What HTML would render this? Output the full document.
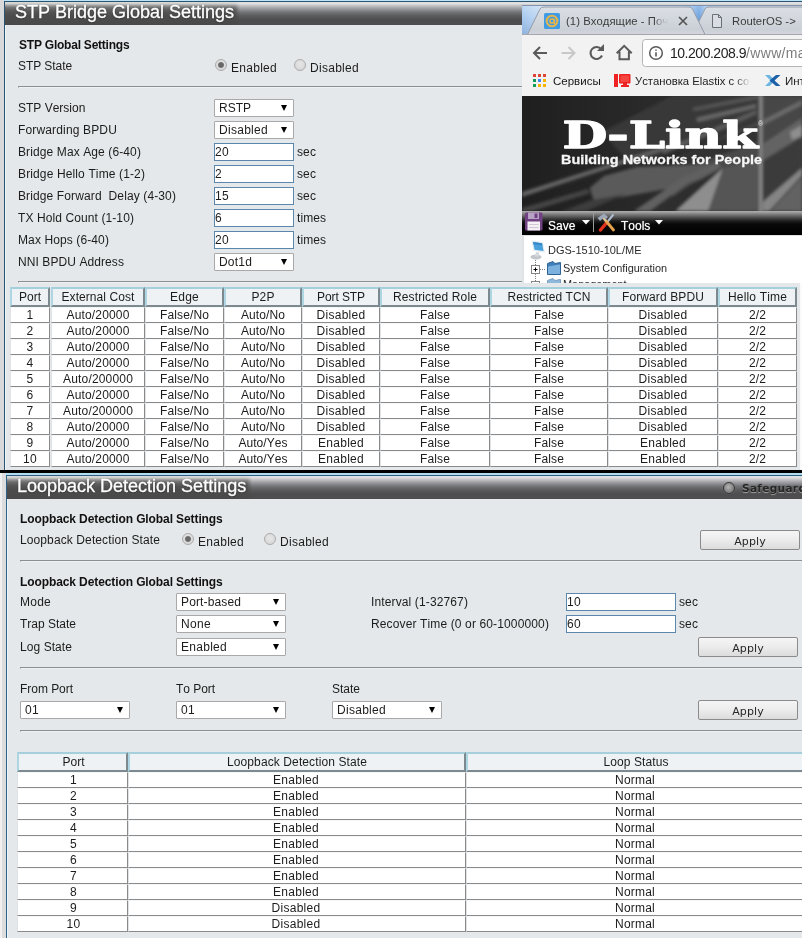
<!DOCTYPE html>
<html lang="en">
<head>
<meta charset="utf-8">
<title>STP Bridge Global Settings</title>
<style>
*{box-sizing:border-box;margin:0;padding:0}
html,body{width:802px;height:938px;overflow:hidden}
body{position:relative;background:#e4e8ea;font-family:"Liberation Sans",sans-serif;font-size:12px;color:#1c1c1c;line-height:14px;font-kerning:none}
.a{position:absolute}
.t{position:absolute;white-space:nowrap;line-height:14px;height:14px}
.b{font-weight:bold;color:#111}
.hr{position:absolute;height:2px;border-top:1px solid #8c8f90;border-left:1px solid #8c8f90;border-bottom:1px solid #eef1f3}
.hdr{position:absolute;background:linear-gradient(#dedfe1 0,#e2e2e4 6%,#c6c6c9 15%,#a3a3a7 26%,#8b8b91 35%,#737577 44%,#666868 52%,#5b5b5d 61%,#535355 70%,#4d4c4e 79%,#4e4e50 100%);color:#fff;font-size:18px;line-height:22px;white-space:nowrap;overflow:hidden;text-shadow:0 1px 1px rgba(0,0,0,.3),0 0 2px rgba(0,0,0,.25);-webkit-text-stroke:.3px #fff}
.hz{position:absolute;height:23px;background:linear-gradient(#dcdcdc 0,#d0d0d0 7%,#b9b9b9 11%,#9f9f9f 15%,#898989 19.500%,#757575 24%,#616161 33%,#555 43%,#4c4c4c 60%,#494949 100%);-webkit-mask-image:linear-gradient(90deg,#000 0,#000 calc(100% - 5px),transparent 100%);mask-image:linear-gradient(90deg,#000 0,#000 calc(100% - 5px),transparent 100%)}
.sel{position:absolute;height:18px;background:#fff;border:1px solid #a9a9a9;border-radius:1px;padding-left:4px;line-height:16px;white-space:nowrap}
.sel i{position:absolute;right:6px;top:5px;width:0;height:0;border-left:3px solid transparent;border-right:3px solid transparent;border-top:6px solid #000}
.inp{position:absolute;height:18px;background:#fff;border:1px solid #5b87ad;padding-left:0;line-height:16px;white-space:nowrap}
.rad{position:absolute;width:12px;height:12px;border-radius:50%;border:1px solid #ababab;background:radial-gradient(circle at 50% 40%,#e6e6e6 0,#dcdcdc 55%,#cfcfcf 100%)}
.rad.on::after{content:"";position:absolute;left:2px;top:2px;width:6px;height:6px;border-radius:50%;background:radial-gradient(circle,#666 0,#6a6a6a 55%,rgba(120,120,120,.5) 100%)}
.btn{position:absolute;height:20px;border:1px solid #8b8b8b;border-radius:2px;background:linear-gradient(#f5f5f5 0,#ededed 45%,#dcdcdc 100%);text-align:center;line-height:20px;padding-top:1px;font-family:"DejaVu Sans","Liberation Sans",sans-serif;font-size:11px;letter-spacing:.1px;color:#262626}
.tb{position:absolute}
.tb div{position:absolute;text-align:center;white-space:nowrap;overflow:hidden;height:16px;line-height:15px;background:#fff;border-right:1px solid #8a8a8a;border-bottom:1px solid #8a8a8a;border-left:1px solid #dfe3e5;border-top:1px solid #f4f6f7}
.tb div.h{height:20px;line-height:16px;background:#eef2f4;border-top:2px solid #a6cfdc;border-left:2px solid #aed6e2;border-right:2px solid #7c8a90;border-bottom:2px solid #7c8a90}
</style>
</head>
<body>
<div id="wrap" style="position:absolute;left:0;top:0;width:802px;height:938px;overflow:hidden;will-change:transform">
<!-- top panel frame -->
<div class="a" style="left:0px;top:0px;width:4px;height:470px;background:#d9d9dc"></div>
<div class="a" style="left:4px;top:1px;width:1px;height:469px;background:#2a5470"></div>
<div class="a" style="left:5px;top:2px;width:1px;height:468px;background:#eaf6fb"></div>
<div class="a" style="left:4px;top:0px;width:798px;height:1px;background:#bde4f6"></div>
<div class="a" style="left:4px;top:1px;width:798px;height:1px;background:#2a5470"></div>
<div class="hdr" style="left:5px;top:2px;width:797px;height:23px"></div>
<div class="hz" style="left:5px;top:2px;width:235px"></div>
<div class="hdr" style="left:5px;top:2px;width:517px;height:23px;padding-left:10px;line-height:21px;background:none">STP Bridge Global Settings</div>
<div class="t b" style="left:19px;top:38px;letter-spacing:-0.226px">STP Global Settings</div>
<div class="t" style="left:18px;top:59px;letter-spacing:-0.077px">STP State</div>
<div class="rad on" style="left:215px;top:59px"></div>
<div class="t" style="left:231px;top:61px;letter-spacing:0.28px">Enabled</div>
<div class="rad" style="left:294px;top:59px"></div>
<div class="t" style="left:310px;top:61px;letter-spacing:0.288px">Disabled</div>
<div class="hr" style="left:18px;top:86px;width:505px"></div>
<div class="t" style="left:18px;top:101px">STP Version</div>
<div class="sel" style="left:214px;top:99px;width:80px">RSTP<i></i></div>
<div class="t" style="left:18px;top:123px;letter-spacing:0.154px">Forwarding BPDU</div>
<div class="sel" style="left:214px;top:121px;width:80px;letter-spacing:0.288px">Disabled<i></i></div>
<div class="t" style="left:18px;top:145px;letter-spacing:0.109px">Bridge Max Age (6-40)</div>
<div class="inp" style="left:214px;top:143px;width:80px;letter-spacing:0.326px">20</div>
<div class="t" style="left:297px;top:145px;letter-spacing:0.109px">sec</div>
<div class="t" style="left:18px;top:167px;letter-spacing:0.129px">Bridge Hello Time (1-2)</div>
<div class="inp" style="left:214px;top:165px;width:80px;letter-spacing:0.326px">2</div>
<div class="t" style="left:297px;top:167px;letter-spacing:0.109px">sec</div>
<div class="t" style="left:18px;top:189px;letter-spacing:0.117px">Bridge Forward&nbsp; Delay (4-30)</div>
<div class="inp" style="left:214px;top:187px;width:80px;letter-spacing:0.326px">15</div>
<div class="t" style="left:297px;top:189px;letter-spacing:0.109px">sec</div>
<div class="t" style="left:18px;top:211px;letter-spacing:0.098px">TX Hold Count (1-10)</div>
<div class="inp" style="left:214px;top:209px;width:80px;letter-spacing:0.326px">6</div>
<div class="t" style="left:297px;top:211px;letter-spacing:0.066px">times</div>
<div class="t" style="left:18px;top:233px;letter-spacing:0.109px">Max Hops (6-40)</div>
<div class="inp" style="left:214px;top:231px;width:80px;letter-spacing:0.326px">20</div>
<div class="t" style="left:297px;top:233px;letter-spacing:0.066px">times</div>
<div class="t" style="left:18px;top:255px;letter-spacing:0.082px">NNI BPDU Address</div>
<div class="sel" style="left:214px;top:253px;width:80px;letter-spacing:0.196px">Dot1d<i></i></div>
<div class="hr" style="left:18px;top:281px;width:505px"></div>
<div class="a" style="left:800px;top:283px;width:2px;height:187px;background:#fbfbfb"></div>
<div class="tb" style="left:0;top:0">
<div class="h" style="left:10px;top:287px;width:40px;">Port</div>
<div class="h" style="left:51px;top:287px;width:94px;letter-spacing:0.075px">External Cost</div>
<div class="h" style="left:145px;top:287px;width:79px;letter-spacing:0.244px">Edge</div>
<div class="h" style="left:224px;top:287px;width:78px;letter-spacing:0.106px">P2P</div>
<div class="h" style="left:302px;top:287px;width:78px;letter-spacing:-0.085px">Port STP</div>
<div class="h" style="left:380px;top:287px;width:110px;letter-spacing:0.131px">Restricted Role</div>
<div class="h" style="left:490px;top:287px;width:118px;letter-spacing:0.07px">Restricted TCN</div>
<div class="h" style="left:608px;top:287px;width:110px;letter-spacing:0.11px">Forward BPDU</div>
<div class="h" style="left:718px;top:287px;width:79px;letter-spacing:0.165px">Hello Time</div>
<div style="left:10px;top:307px;width:40px;letter-spacing:0.326px">1</div>
<div style="left:51px;top:307px;width:94px;letter-spacing:0.161px">Auto/20000</div>
<div style="left:145px;top:307px;width:79px;letter-spacing:0.123px">False/No</div>
<div style="left:224px;top:307px;width:78px;letter-spacing:0.092px">Auto/No</div>
<div style="left:302px;top:307px;width:78px;letter-spacing:0.288px">Disabled</div>
<div style="left:380px;top:307px;width:110px;letter-spacing:0.131px">False</div>
<div style="left:490px;top:307px;width:118px;letter-spacing:0.131px">False</div>
<div style="left:608px;top:307px;width:110px;letter-spacing:0.288px">Disabled</div>
<div style="left:718px;top:307px;width:79px;letter-spacing:0.106px">2/2</div>
<div style="left:10px;top:323px;width:40px;letter-spacing:0.326px">2</div>
<div style="left:51px;top:323px;width:94px;letter-spacing:0.161px">Auto/20000</div>
<div style="left:145px;top:323px;width:79px;letter-spacing:0.123px">False/No</div>
<div style="left:224px;top:323px;width:78px;letter-spacing:0.092px">Auto/No</div>
<div style="left:302px;top:323px;width:78px;letter-spacing:0.288px">Disabled</div>
<div style="left:380px;top:323px;width:110px;letter-spacing:0.131px">False</div>
<div style="left:490px;top:323px;width:118px;letter-spacing:0.131px">False</div>
<div style="left:608px;top:323px;width:110px;letter-spacing:0.288px">Disabled</div>
<div style="left:718px;top:323px;width:79px;letter-spacing:0.106px">2/2</div>
<div style="left:10px;top:339px;width:40px;letter-spacing:0.326px">3</div>
<div style="left:51px;top:339px;width:94px;letter-spacing:0.161px">Auto/20000</div>
<div style="left:145px;top:339px;width:79px;letter-spacing:0.123px">False/No</div>
<div style="left:224px;top:339px;width:78px;letter-spacing:0.092px">Auto/No</div>
<div style="left:302px;top:339px;width:78px;letter-spacing:0.288px">Disabled</div>
<div style="left:380px;top:339px;width:110px;letter-spacing:0.131px">False</div>
<div style="left:490px;top:339px;width:118px;letter-spacing:0.131px">False</div>
<div style="left:608px;top:339px;width:110px;letter-spacing:0.288px">Disabled</div>
<div style="left:718px;top:339px;width:79px;letter-spacing:0.106px">2/2</div>
<div style="left:10px;top:355px;width:40px;letter-spacing:0.326px">4</div>
<div style="left:51px;top:355px;width:94px;letter-spacing:0.161px">Auto/20000</div>
<div style="left:145px;top:355px;width:79px;letter-spacing:0.123px">False/No</div>
<div style="left:224px;top:355px;width:78px;letter-spacing:0.092px">Auto/No</div>
<div style="left:302px;top:355px;width:78px;letter-spacing:0.288px">Disabled</div>
<div style="left:380px;top:355px;width:110px;letter-spacing:0.131px">False</div>
<div style="left:490px;top:355px;width:118px;letter-spacing:0.131px">False</div>
<div style="left:608px;top:355px;width:110px;letter-spacing:0.288px">Disabled</div>
<div style="left:718px;top:355px;width:79px;letter-spacing:0.106px">2/2</div>
<div style="left:10px;top:371px;width:40px;letter-spacing:0.326px">5</div>
<div style="left:51px;top:371px;width:94px;letter-spacing:0.176px">Auto/200000</div>
<div style="left:145px;top:371px;width:79px;letter-spacing:0.123px">False/No</div>
<div style="left:224px;top:371px;width:78px;letter-spacing:0.092px">Auto/No</div>
<div style="left:302px;top:371px;width:78px;letter-spacing:0.288px">Disabled</div>
<div style="left:380px;top:371px;width:110px;letter-spacing:0.131px">False</div>
<div style="left:490px;top:371px;width:118px;letter-spacing:0.131px">False</div>
<div style="left:608px;top:371px;width:110px;letter-spacing:0.288px">Disabled</div>
<div style="left:718px;top:371px;width:79px;letter-spacing:0.106px">2/2</div>
<div style="left:10px;top:387px;width:40px;letter-spacing:0.326px">6</div>
<div style="left:51px;top:387px;width:94px;letter-spacing:0.161px">Auto/20000</div>
<div style="left:145px;top:387px;width:79px;letter-spacing:0.123px">False/No</div>
<div style="left:224px;top:387px;width:78px;letter-spacing:0.092px">Auto/No</div>
<div style="left:302px;top:387px;width:78px;letter-spacing:0.288px">Disabled</div>
<div style="left:380px;top:387px;width:110px;letter-spacing:0.131px">False</div>
<div style="left:490px;top:387px;width:118px;letter-spacing:0.131px">False</div>
<div style="left:608px;top:387px;width:110px;letter-spacing:0.288px">Disabled</div>
<div style="left:718px;top:387px;width:79px;letter-spacing:0.106px">2/2</div>
<div style="left:10px;top:403px;width:40px;letter-spacing:0.326px">7</div>
<div style="left:51px;top:403px;width:94px;letter-spacing:0.176px">Auto/200000</div>
<div style="left:145px;top:403px;width:79px;letter-spacing:0.123px">False/No</div>
<div style="left:224px;top:403px;width:78px;letter-spacing:0.092px">Auto/No</div>
<div style="left:302px;top:403px;width:78px;letter-spacing:0.288px">Disabled</div>
<div style="left:380px;top:403px;width:110px;letter-spacing:0.131px">False</div>
<div style="left:490px;top:403px;width:118px;letter-spacing:0.131px">False</div>
<div style="left:608px;top:403px;width:110px;letter-spacing:0.288px">Disabled</div>
<div style="left:718px;top:403px;width:79px;letter-spacing:0.106px">2/2</div>
<div style="left:10px;top:419px;width:40px;letter-spacing:0.326px">8</div>
<div style="left:51px;top:419px;width:94px;letter-spacing:0.161px">Auto/20000</div>
<div style="left:145px;top:419px;width:79px;letter-spacing:0.123px">False/No</div>
<div style="left:224px;top:419px;width:78px;letter-spacing:0.092px">Auto/No</div>
<div style="left:302px;top:419px;width:78px;letter-spacing:0.288px">Disabled</div>
<div style="left:380px;top:419px;width:110px;letter-spacing:0.131px">False</div>
<div style="left:490px;top:419px;width:118px;letter-spacing:0.131px">False</div>
<div style="left:608px;top:419px;width:110px;letter-spacing:0.288px">Disabled</div>
<div style="left:718px;top:419px;width:79px;letter-spacing:0.106px">2/2</div>
<div style="left:10px;top:435px;width:40px;letter-spacing:0.326px">9</div>
<div style="left:51px;top:435px;width:94px;letter-spacing:0.161px">Auto/20000</div>
<div style="left:145px;top:435px;width:79px;letter-spacing:0.123px">False/No</div>
<div style="left:224px;top:435px;width:78px;letter-spacing:0.038px">Auto/Yes</div>
<div style="left:302px;top:435px;width:78px;letter-spacing:0.28px">Enabled</div>
<div style="left:380px;top:435px;width:110px;letter-spacing:0.131px">False</div>
<div style="left:490px;top:435px;width:118px;letter-spacing:0.131px">False</div>
<div style="left:608px;top:435px;width:110px;letter-spacing:0.28px">Enabled</div>
<div style="left:718px;top:435px;width:79px;letter-spacing:0.106px">2/2</div>
<div style="left:10px;top:451px;width:40px;letter-spacing:0.326px">10</div>
<div style="left:51px;top:451px;width:94px;letter-spacing:0.161px">Auto/20000</div>
<div style="left:145px;top:451px;width:79px;letter-spacing:0.123px">False/No</div>
<div style="left:224px;top:451px;width:78px;letter-spacing:0.038px">Auto/Yes</div>
<div style="left:302px;top:451px;width:78px;letter-spacing:0.28px">Enabled</div>
<div style="left:380px;top:451px;width:110px;letter-spacing:0.131px">False</div>
<div style="left:490px;top:451px;width:118px;letter-spacing:0.131px">False</div>
<div style="left:608px;top:451px;width:110px;letter-spacing:0.28px">Enabled</div>
<div style="left:718px;top:451px;width:79px;letter-spacing:0.106px">2/2</div>
</div>
<div class="a" style="left:0px;top:470px;width:802px;height:3px;background:#000"></div>
<!-- bottom panel frame -->
<div class="a" style="left:0px;top:473px;width:2px;height:465px;background:#f0f0f0"></div>
<div class="a" style="left:2px;top:473px;width:4px;height:465px;background:#dcdcde"></div>
<div class="a" style="left:6px;top:473px;width:796px;height:2px;background:#b4dcf0"></div>
<div class="a" style="left:6px;top:475px;width:796px;height:1px;background:#2c5f84"></div>
<div class="a" style="left:6px;top:475px;width:1px;height:463px;background:#2c6288"></div>
<div class="a" style="left:7px;top:476px;width:1px;height:462px;background:#eaf6fb"></div>
<div class="hdr" style="left:7px;top:476px;width:795px;height:23px"></div>
<div class="hz" style="left:7px;top:476px;width:245px"></div>
<div class="hdr" style="left:7px;top:476px;width:600px;height:23px;padding-left:10px;line-height:20px;background:none">Loopback Detection Settings</div>
<div class="a" style="left:723px;top:482px;width:12px;height:12px;border-radius:50%;border:1.5px solid #383838;background:radial-gradient(circle at 45% 40%,#b4b4b4 0,#8c8c8c 50%,#6a6a6a 100%);box-shadow:0 0 1px #888"></div>
<div class="t" style="left:742px;top:481px;font-family:&quot;DejaVu Sans&quot;,&quot;Liberation Sans&quot;,sans-serif;font-weight:bold;font-size:10.5px;letter-spacing:.35px;color:#262626;text-shadow:0 1px 1px rgba(190,190,190,.8),0 0 2px rgba(40,40,40,.6)">Safeguard</div>
<div class="t b" style="left:20px;top:512px;letter-spacing:-0.099px">Loopback Detection Global Settings</div>
<div class="t" style="left:20px;top:533px;letter-spacing:0.107px">Loopback Detection State</div>
<div class="rad on" style="left:182px;top:533px"></div>
<div class="t" style="left:198px;top:535px;letter-spacing:0.28px">Enabled</div>
<div class="rad" style="left:264px;top:533px"></div>
<div class="t" style="left:280px;top:535px;letter-spacing:0.288px">Disabled</div>
<div class="btn" style="left:700px;top:530px;width:100px">Apply</div>
<div class="hr" style="left:20px;top:560px;width:782px"></div>
<div class="t b" style="left:20px;top:575px;letter-spacing:-0.099px">Loopback Detection Global Settings</div>
<div class="t" style="left:20px;top:595px;letter-spacing:0.246px">Mode</div>
<div class="sel" style="left:176px;top:593px;width:110px;letter-spacing:0.13px">Port-based<i></i></div>
<div class="t" style="left:20px;top:617px">Trap State</div>
<div class="sel" style="left:176px;top:615px;width:110px;letter-spacing:0.328px">None<i></i></div>
<div class="t" style="left:20px;top:640px;letter-spacing:0.069px">Log State</div>
<div class="sel" style="left:176px;top:638px;width:110px;letter-spacing:0.28px">Enabled<i></i></div>
<div class="t" style="left:371px;top:595px;letter-spacing:0.127px">Interval (1-32767)</div>
<div class="inp" style="left:566px;top:593px;width:110px;letter-spacing:0.326px">10</div>
<div class="t" style="left:679px;top:595px;letter-spacing:0.109px">sec</div>
<div class="t" style="left:371px;top:617px;letter-spacing:0.131px">Recover Time (0 or 60-1000000)</div>
<div class="inp" style="left:566px;top:615px;width:110px;letter-spacing:0.326px">60</div>
<div class="t" style="left:679px;top:617px;letter-spacing:0.109px">sec</div>
<div class="btn" style="left:698px;top:637px;width:100px">Apply</div>
<div class="hr" style="left:20px;top:667px;width:782px"></div>
<div class="t" style="left:20px;top:682px;letter-spacing:-0.038px">From Port</div>
<div class="t" style="left:176px;top:682px;letter-spacing:-0.049px">To Port</div>
<div class="t" style="left:332px;top:682px">State</div>
<div class="sel" style="left:20px;top:701px;width:110px;letter-spacing:0.326px">01<i></i></div>
<div class="sel" style="left:176px;top:701px;width:110px;letter-spacing:0.326px">01<i></i></div>
<div class="sel" style="left:332px;top:701px;width:110px;letter-spacing:0.288px">Disabled<i></i></div>
<div class="btn" style="left:698px;top:700px;width:100px">Apply</div>
<div class="hr" style="left:20px;top:730px;width:782px"></div>
<div class="tb" style="left:0;top:0">
<div class="h" style="left:17px;top:752px;width:111px;padding-left:2px;">Port</div>
<div class="h" style="left:128px;top:752px;width:338px;letter-spacing:0.107px">Loopback Detection State</div>
<div class="h" style="left:466px;top:752px;width:340px;letter-spacing:0.086px">Loop Status</div>
<div style="left:17px;top:772px;width:111px;padding-left:2px;letter-spacing:0.326px">1</div>
<div style="left:128px;top:772px;width:338px;padding-right:2px;letter-spacing:0.28px">Enabled</div>
<div style="left:466px;top:772px;width:340px;padding-right:2px;letter-spacing:0.221px">Normal</div>
<div style="left:17px;top:788px;width:111px;padding-left:2px;letter-spacing:0.326px">2</div>
<div style="left:128px;top:788px;width:338px;padding-right:2px;letter-spacing:0.28px">Enabled</div>
<div style="left:466px;top:788px;width:340px;padding-right:2px;letter-spacing:0.221px">Normal</div>
<div style="left:17px;top:804px;width:111px;padding-left:2px;letter-spacing:0.326px">3</div>
<div style="left:128px;top:804px;width:338px;padding-right:2px;letter-spacing:0.28px">Enabled</div>
<div style="left:466px;top:804px;width:340px;padding-right:2px;letter-spacing:0.221px">Normal</div>
<div style="left:17px;top:820px;width:111px;padding-left:2px;letter-spacing:0.326px">4</div>
<div style="left:128px;top:820px;width:338px;padding-right:2px;letter-spacing:0.28px">Enabled</div>
<div style="left:466px;top:820px;width:340px;padding-right:2px;letter-spacing:0.221px">Normal</div>
<div style="left:17px;top:836px;width:111px;padding-left:2px;letter-spacing:0.326px">5</div>
<div style="left:128px;top:836px;width:338px;padding-right:2px;letter-spacing:0.28px">Enabled</div>
<div style="left:466px;top:836px;width:340px;padding-right:2px;letter-spacing:0.221px">Normal</div>
<div style="left:17px;top:852px;width:111px;padding-left:2px;letter-spacing:0.326px">6</div>
<div style="left:128px;top:852px;width:338px;padding-right:2px;letter-spacing:0.28px">Enabled</div>
<div style="left:466px;top:852px;width:340px;padding-right:2px;letter-spacing:0.221px">Normal</div>
<div style="left:17px;top:868px;width:111px;padding-left:2px;letter-spacing:0.326px">7</div>
<div style="left:128px;top:868px;width:338px;padding-right:2px;letter-spacing:0.28px">Enabled</div>
<div style="left:466px;top:868px;width:340px;padding-right:2px;letter-spacing:0.221px">Normal</div>
<div style="left:17px;top:884px;width:111px;padding-left:2px;letter-spacing:0.326px">8</div>
<div style="left:128px;top:884px;width:338px;padding-right:2px;letter-spacing:0.28px">Enabled</div>
<div style="left:466px;top:884px;width:340px;padding-right:2px;letter-spacing:0.221px">Normal</div>
<div style="left:17px;top:900px;width:111px;padding-left:2px;letter-spacing:0.326px">9</div>
<div style="left:128px;top:900px;width:338px;padding-right:2px;letter-spacing:0.288px">Disabled</div>
<div style="left:466px;top:900px;width:340px;padding-right:2px;letter-spacing:0.221px">Normal</div>
<div style="left:17px;top:916px;width:111px;padding-left:2px;letter-spacing:0.326px">10</div>
<div style="left:128px;top:916px;width:338px;padding-right:2px;letter-spacing:0.288px">Disabled</div>
<div style="left:466px;top:916px;width:340px;padding-right:2px;letter-spacing:0.221px">Normal</div>
</div>
<!-- ===== browser window overlay ===== -->
<div class="a" id="ov" style="left:522px;top:2px;width:280px;height:281px;overflow:hidden;background:#fff">
  <!-- window frame top -->
  <div class="a" style="left:0;top:0;width:280px;height:3px;background:linear-gradient(#dedfe1 0,#e2e2e4 45%,#cbcbce 100%)"></div>
  <div class="a" style="left:0;top:3px;width:280px;height:1px;background:#8494aa"></div>
  <!-- tab strip -->
  <div class="a" style="left:0;top:4px;width:280px;height:29px;background:linear-gradient(rgba(255,255,255,.25) 0,rgba(255,255,255,0) 40%,rgba(40,80,150,.18) 100%),linear-gradient(90deg,#a6c9ee 0,#b9d4f1 12px,#c6d9ef 24px,#c9d6e6 160px,#8db8e8 170px,#6fa3e0 177px,#9cc0ea 184px,#c9d6e6 200px)"></div>
  <svg class="a" style="left:0;top:4px" width="280" height="29" viewBox="0 0 280 29">
    <defs>
      <linearGradient id="tg" x1="0" y1="0" x2="0" y2="1"><stop offset="0" stop-color="#dadee4"/><stop offset=".8" stop-color="#cbd0d8"/><stop offset="1" stop-color="#d4d7dc"/></linearGradient>
    </defs>
    <path d="M170 29.500 L183 3 Q184 1 187 1 L281 1 L281 29.500 Z" fill="url(#tg)" stroke="#939ca8" stroke-width="1"/>
    <path d="M5 29.500 L18 3 Q19 1 22 1 L167 1 Q169.500 1 170.500 3 L183.500 29.500 Z" fill="url(#tg)" stroke="#939ca8" stroke-width="1"/>
    <!-- favicon -->
    <rect x="22" y="7" width="16" height="16" rx="1.5" fill="#3f9be3"/>
    <circle cx="30" cy="15" r="5.300" fill="none" stroke="#e2b54e" stroke-width="2.100"/>
    <circle cx="30" cy="15" r="2.100" fill="none" stroke="#e2b54e" stroke-width="1.500"/>
    <path d="M32.500 13 L32.500 17.500 Q33.500 18.500 35 17.500" fill="none" stroke="#e2b54e" stroke-width="1.300"/>
    <!-- close x -->
    <path d="M157 11 L165 19 M165 11 L157 19" stroke="#555" stroke-width="1.700" fill="none"/>
    <!-- doc icon -->
    <path d="M190.500 8.500 L196.500 8.500 L199.500 11.500 L199.500 21.500 L190.500 21.500 Z M196.500 8.500 L196.500 11.500 L199.500 11.500" fill="#d9dde3" stroke="#6a7078" stroke-width="1"/>
  </svg>
  <div class="t" style="left:44px;top:12px;width:103px;overflow:hidden;color:#3c3c3c;font-size:11.300px;letter-spacing:.05px;-webkit-mask-image:linear-gradient(90deg,#000 0,#000 88px,rgba(0,0,0,.4) 94px,rgba(0,0,0,.1) 100px,transparent 103px);mask-image:linear-gradient(90deg,#000 0,#000 88px,rgba(0,0,0,.4) 94px,rgba(0,0,0,.1) 100px,transparent 103px)">(1) Входящие - Поч</div>
  <div class="t" style="left:210px;top:12px;color:#3c3c3c;font-size:11.300px">RouterOS -&gt;</div>
  <div class="a" style="left:0;top:32px;width:280px;height:1px;background:#a3a7ad"></div>
  <!-- toolbar -->
  <div class="a" style="left:0;top:33px;width:280px;height:61px;background:#f2f2f2"></div>
  <svg class="a" style="left:0;top:33px" width="280" height="34" viewBox="0 0 280 34">
    <g fill="none" stroke="#5a5a5a" stroke-width="2">
      <path d="M25 18 L12.500 18 M18 12 L12 18 L18 24"/>
      <path d="M39.500 18 L52 18 M46.500 12 L52.500 18 L46.500 24" stroke="#c8c8c8"/>
      <path d="M79.300 14.300 A6 6 0 1 0 80 20.500" stroke-width="2.100"/>
      <path d="M94.700 18.300 L102.200 10.800 L109.700 18.300 M97.500 16.500 L97.500 24.300 L106.900 24.300 L106.900 16.500"/>
    </g>
    <path d="M82 9 L82 16 L75 16 Z" fill="#5a5a5a"/>
    <rect x="120.500" y="4.500" width="170" height="27" rx="3" fill="#fff" stroke="#b4b4b4"/>
    <circle cx="134" cy="18" r="6.300" fill="none" stroke="#5a5a5a" stroke-width="1.5"/>
    <path d="M134 14.500 L134 15.800 M134 17.200 L134 21.600" stroke="#5a5a5a" stroke-width="1.600"/>
  </svg>
  <div class="t" style="left:148px;top:42px;font-size:14px;line-height:18px;height:18px;color:#222;letter-spacing:-.48px">10.200.208.9<span style="color:#7c7c7c;letter-spacing:.35px">/www/ma</span></div>
  <!-- bookmarks -->
  <svg class="a" style="left:0;top:66px" width="280" height="28" viewBox="0 0 280 28">
    <g>
      <rect x="11" y="6" width="3" height="3" fill="#db4437"/><rect x="16" y="6" width="3" height="3" fill="#db4437"/><rect x="21" y="6" width="3" height="3" fill="#db4437"/>
      <rect x="11" y="11" width="3" height="3" fill="#0f9d58"/><rect x="16" y="11" width="3" height="3" fill="#4285f4"/><rect x="21" y="11" width="3" height="3" fill="#f4b400"/>
      <rect x="11" y="16" width="3" height="3" fill="#0f9d58"/><rect x="16" y="16" width="3" height="3" fill="#f4b400"/><rect x="21" y="16" width="3" height="3" fill="#f4b400"/>
    </g>
    <g fill="#ee2222">
      <rect x="92" y="6" width="4" height="13"/>
      <rect x="97" y="6" width="11.500" height="9.500" rx="1"/>
      <rect x="101" y="15" width="4" height="2.500"/><rect x="99" y="17" width="8" height="2"/>
    </g>
    <rect x="98.500" y="7.500" width="8.500" height="6.500" fill="#f5453f"/>
    <path d="M243 7 L247.500 7 L253 12.500 L247.500 18 L243 18 L248.500 12.500 Z" fill="#6cb6e2"/>
    <path d="M258.500 7 L254 7 L247.500 12.500 L254 18 L258.500 18 L252.500 12.500 Z" fill="#1c60aa"/>
  </svg>
  <div class="t" style="left:31px;top:72px;color:#151515;font-size:11.500px">Сервисы</div>
  <div class="t" style="left:113px;top:72px;width:116px;overflow:hidden;color:#222;font-size:11.300px;-webkit-mask-image:linear-gradient(90deg,#000 0,#000 100px,rgba(0,0,0,.2) 112px,transparent 116px);mask-image:linear-gradient(90deg,#000 0,#000 100px,rgba(0,0,0,.2) 112px,transparent 116px)">Установка Elastix с со</div>
  <div class="t" style="left:263px;top:72px;color:#222;font-size:11.500px">Инт</div>
  <!-- banner -->
  <svg class="a" style="left:0;top:94px" width="280" height="115" viewBox="0 0 280 115">
    <defs>
      <linearGradient id="bg1" x1="0" y1="0" x2="1" y2="0"><stop offset="0" stop-color="#1f1f1f"/><stop offset=".5" stop-color="#2b2b2b"/><stop offset="1" stop-color="#3d3d3d"/></linearGradient>
      <filter id="bl" x="-10%" y="-10%" width="120%" height="120%"><feGaussianBlur stdDeviation="1.7"/></filter>
      <filter id="ts" x="-5%" y="-20%" width="110%" height="140%"><feGaussianBlur stdDeviation=".45"/></filter>
    </defs>
    <rect width="280" height="115" fill="url(#bg1)"/>
    <g filter="url(#bl)">
      <path d="M110 70 L236 22 L236 0 L150 0 L80 36 Z" fill="#383838"/>
      <path d="M150 62 L236 26 L236 76 L150 104 Z" fill="#4a4a4a"/>
      <path d="M174 22 L234 8 L234 12 L176 26 Z" fill="#666"/>
      <path d="M170 12 L236 -1 L236 3 L172 15 Z" fill="#545454"/>
      <path d="M140 54 L176 39 L234 14 L235 18 L178 43 L142 58 Z" fill="#5c5c5c"/>
      <path d="M30 100 L236 30 L236 46 L60 108 Z" fill="#1f1f1f" opacity=".55"/>
      <path d="M0 96 L84 69 L160 45 L161 48 L85 73 L0 101 Z" fill="#636363"/>
      <path d="M68 92 L82 80 L115 71 L196 68 L196 78 L150 92 L100 101 L72 105 Z" fill="#5a5a5a"/>
      <path d="M0 112 L66 93 L68 97 L10 115 L0 115 Z" fill="#454545"/>
      <path d="M40 115 L70 104 L104 98 L64 115 Z" fill="#3c3c3c"/>
      <path d="M112 115 L160 82 L196 66 L199 71 L165 88 L128 115 Z" fill="#606060"/>
      <path d="M130 115 L166 90 L200 72 L162 115 Z" fill="#2e2e2e"/>
      <path d="M184 115 L202 72 L237 62 L237 115 Z" fill="#545454"/>
      <path d="M154 115 L201 72 L186 115 Z" fill="#8e8e8e"/>
      <rect x="240" y="0" width="40" height="115" fill="#464646"/>
      <path d="M241 24 L280 4 L280 9 L241 29 Z" fill="#6a6a6a"/>
      <path d="M241 48 L280 22 L280 40 L241 64 Z" fill="#646464"/>
      <path d="M268 36 L280 29 L280 40 L270 44 Z" fill="#8e8e8e"/>
      <path d="M241 66 L280 42 L280 72 L241 104 Z" fill="#3b3b3b"/>
      <path d="M241 106 L280 72 L280 79 L247 115 L241 115 Z" fill="#858585"/>
      <path d="M249 115 L280 81 L280 115 Z" fill="#626262"/>
      <rect x="237" y="-2" width="3.500" height="119" fill="#868686"/>
    </g>
    <text transform="translate(40.500 51.800) scale(1.415 1)" x="0" y="0" font-family="'DejaVu Serif','Liberation Serif',serif" font-weight="bold" font-size="36.500" fill="#fff" stroke="#fff" stroke-width="1.300" stroke-linejoin="round">D-Link</text>
    <text x="236" y="30" font-family="'Liberation Sans',sans-serif" font-size="7" fill="#e8e8e8">®</text>
    <text x="39" y="68" font-family="'Liberation Sans',sans-serif" font-weight="bold" font-size="13.400" fill="#f6f6f6" stroke="#f6f6f6" stroke-width=".3" textLength="201" lengthAdjust="spacingAndGlyphs">Building Networks for People</text>
  </svg>
  <!-- save/tools bar -->
  <div class="a" style="left:0;top:209px;width:280px;height:24px;background:linear-gradient(#adadad 0,#9c9c9c 6%,#7c7c7c 14%,#5c5c5c 23%,#3c3c3c 32%,#1e1e1e 42%,#090909 55%,#000 100%)"></div>
  <div class="a" style="left:0;top:233px;width:280px;height:1px;background:#e2e2e2"></div>
  <svg class="a" style="left:0;top:209px" width="280" height="24" viewBox="0 0 280 24">
    <rect x="3" y="1.500" width="17.500" height="18" rx="1.500" fill="#714283"/>
    <rect x="6" y="1.500" width="11" height="6.500" fill="#b9a2c4"/>
    <rect x="5.500" y="10.500" width="12.500" height="9" fill="#f4f0f6"/>
    <rect x="12.500" y="2.500" width="3" height="4.500" fill="#714283"/>
    <path d="M7 13.500 L16.500 13.500 M7 16.500 L16.500 16.500" stroke="#cfc6d6" stroke-width="1"/>
    <path d="M60 9 L68 9 L64 13.500 Z" fill="#fff"/>
    <rect x="71" y="2" width="1" height="19" fill="#9a9a9a"/>
    <path d="M84.500 12 L91 4" stroke="#aebccf" stroke-width="2" stroke-linecap="round"/>
    <path d="M78.500 19 L84 12.500" stroke="#e2321c" stroke-width="3.400" stroke-linecap="round"/>
    <path d="M91.500 19 L84 10" stroke="#e6a24c" stroke-width="2.800" stroke-linecap="round"/>
    <path d="M84 10 L81 6.500" stroke="#d9c29a" stroke-width="2.400"/>
    <path d="M75.500 7 L82 2.500 L86 6 L84 8 L81.500 6.500 L78 10 Z" fill="#9ea8ba"/>
    <path d="M133 9 L141 9 L137 13.500 Z" fill="#fff"/>
  </svg>
  <div class="t" style="left:26px;top:217px;color:#fff;text-shadow:0 0 1px rgba(255,255,255,.7)">Save</div>
  <div class="t" style="left:99px;top:217px;color:#fff;text-shadow:0 0 1px rgba(255,255,255,.7)">Tools</div>
  <!-- tree -->
  <div class="a" style="left:0;top:233px;width:2px;height:48px;background:#dfe3e5"></div>
  <svg class="a" style="left:0;top:232px" width="280" height="49" viewBox="0 0 280 49">
    <path d="M9.500 6.500 L21 8 L23 18.500 L11.500 17 Z" fill="#e4edf4"/>
    <path d="M11 8 L20 9.300 L21.500 17 L12.500 15.700 Z" fill="#4aa2dc"/>
    <path d="M11 8 L20 9.300 L20.500 11.500 L11.500 10.200 Z" fill="#3688c8"/>
    <ellipse cx="14" cy="23" rx="5.500" ry="2.500" fill="#c2c6cb"/>
    <path d="M14 18 L17.500 18.500 L16.500 22.500 L13 22.500 Z" fill="#d6dade"/>
    <path d="M13.500 26 L13.500 31 M13.500 40 L13.500 49 M18 35.500 L24 35.500" stroke="#808080" stroke-width="1" stroke-dasharray="1 1"/>
    <rect x="9.500" y="31.500" width="8" height="8" fill="#fff" stroke="#848484"/>
    <path d="M11.500 35.500 L15.500 35.500 M13.500 33.500 L13.500 37.500" stroke="#000" stroke-width="1"/>
    <path d="M25.500 29.500 L31 27.500 L33 29.500 L38.500 28.500 L38.500 40.500 L25.500 40.500 Z" fill="#3f7fba" stroke="#2f6396" stroke-width="1"/>
    <path d="M26 32.500 L38 30.500 L38 40 L26 40 Z" fill="#7db2de"/>
    <rect x="9.500" y="47.500" width="8" height="8" fill="#fff" stroke="#848484"/>
    <path d="M25.500 46.500 L31 44.500 L33 46.500 L38.500 45.500 L38.500 56 L25.500 56 Z" fill="#8fb9dc" stroke="#7a9cbd" stroke-width="1"/>
  </svg>
  <div class="t" style="left:26px;top:241px;font-size:11px;color:#2a2a2a">DGS-1510-10L/ME</div>
  <div class="t" style="left:41px;top:259px;font-size:10.900px;color:#2a2a2a">System Configuration</div>
  <div class="t" style="left:41px;top:275px;font-size:10.900px;color:#2a2a2a">Management</div>
</div>
</div>
</body>
</html>
